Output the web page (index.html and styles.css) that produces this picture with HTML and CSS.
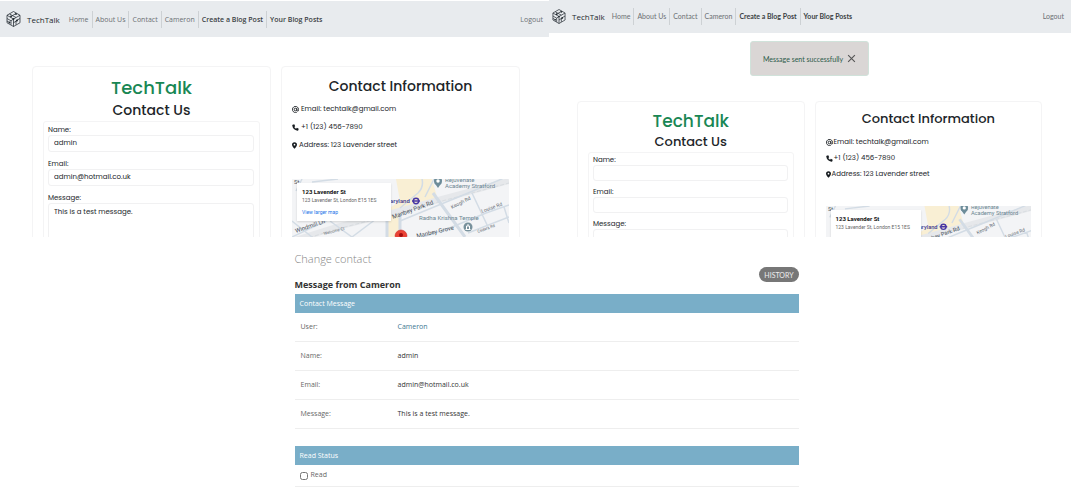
FILE: index.html
```html
<!DOCTYPE html>
<html lang="en">
<head>
<meta charset="utf-8">
<title>TechTalk contact</title>
<link rel="stylesheet" href="styles.css">
</head>
<body>
<svg class="defs" aria-hidden="true">
  <symbol id="logo" viewBox="0 0 30 32">
    <g fill="none" stroke="#222a30" stroke-width="1.500" stroke-linejoin="round">
      <path d="M15 1 28 8.500V23.500L15 31 2 23.500V8.500Z"/>
      <path d="M2 8.500 15 16 28 8.500M15 16V31M7 6l13 7M10 11l10-6M2 15l8 4.500v8M10 19.500 15 16M28 15l-8 4.500v8M15 23.500l8-5M2 20l5 3"/>
    </g>
    <g fill="#222a30"><circle cx="10" cy="11" r="1.800"/><circle cx="20" cy="6" r="1.800"/><circle cx="7" cy="23" r="1.800"/><circle cx="22" cy="19" r="1.800"/><circle cx="15" cy="16" r="1.800"/></g>
  </symbol>
  <symbol id="at" viewBox="0 0 16 16"><g fill="none" stroke="#171c20" stroke-width="2"><circle cx="8" cy="8" r="3"/><path d="M11 5v4.500a2 2 0 0 0 4 0V8a7 7 0 1 0-4 6.300"/></g></symbol>
  <symbol id="phone" viewBox="0 0 16 16"><path fill="#171c20" d="M5.200.8 1.500 1.500Q.5 2 .6 3.500 2 13 12.500 15.400q1.500.1 2-1l.8-3.600-4.100-2-1.900 2Q6.500 9.500 5.300 6.700l2-1.800Z"/></symbol>
  <symbol id="pin" viewBox="0 0 12 16"><path fill="#171c20" fill-rule="evenodd" d="M6 0a6 6 0 0 1 6 6c0 3-4 7.500-6 10C4 13.500 0 9 0 6a6 6 0 0 1 6-6Zm0 4a2 2 0 1 0 0 4 2 2 0 0 0 0-4Z"/></symbol>
  <symbol id="map" viewBox="0 0 217 58">
    <path fill="#f3f4f6" d="M0 0h217v58H0z"/>
    <path fill="#f9efd4" d="M104 0h36l5 18-16 8-22 8v24H96V30l12-8Z"/>
    <path fill="none" stroke="#e6e8eb" stroke-width="6" d="M0 62 45 48 100 34 150 20 217 2"/>
    <path fill="none" stroke="#d8dce0" stroke-width="1" stroke-dasharray="4 2" d="M0 64 45 50 100 36 150 22 217 4"/>
    <g fill="none" stroke="#d3dce5" stroke-width="1.500">
      <path stroke-width="3" d="M95 30v28M108 34v24M141 14l32 44"/>
      <path d="M130 0q2 8-4 14l-18 15M133 18 142 0M108 42l34-14 22-9 53-22M120 62l40-14 34-14 23-8M180 14l17 36M176 54l41-16M212 28l5 16M0 58l38-18M38 42l22 16M60 58l32-24M0 42l20 16M20 3 46 0M10 0 4 12"/>
    </g>
    <circle cx="146" cy="2" r="4" fill="#6d8c99"/><path fill="#6d8c99" d="M142.500 4h7L146 9z"/><circle cx="146" cy="2" r="1.700" fill="#fff"/>
    <circle cx="176" cy="48" r="4.500" fill="#78919c"/><path fill="none" stroke="#fff" d="M173.500 50.500h5M174.500 50v-3h3v3M176 47v-2"/>
    <g fill="none" stroke="#4937a5" stroke-width="1.500"><circle cx="124" cy="22" r="2.700"/><path d="M120 22h8"/></g>
    <path fill="#ea4335" stroke="#c5221f" stroke-width=".5" d="M103 57a6 6 0 0 1 12 0l-3 7h-6Z"/><circle cx="109" cy="56" r="2" fill="#a50e0e"/>
  </symbol>
</svg>

<main class="screens">
  <section class="screen screen-a">
    <nav class="navbar">
      <a class="brand" href="#"><svg class="logo"><use href="#logo"/></svg>TechTalk</a>
      <a href="#">Home</a><a href="#">About Us</a><a href="#">Contact</a><a href="#">Cameron</a><a class="strong" href="#">Create a Blog Post</a><a class="strong" href="#">Your Blog Posts</a>
      <a class="logout" href="#">Logout</a>
    </nav>
    <div class="cards">
      <div class="card">
        <h1>TechTalk</h1>
        <h2>Contact Us</h2>
        <form class="fields">
          <label for="a-name">Name:</label><input id="a-name" type="text" value="admin">
          <label for="a-email">Email:</label><input id="a-email" type="text" value="admin@hotmail.co.uk">
          <label for="a-msg">Message:</label><textarea id="a-msg">This is a test message.</textarea>
        </form>
      </div>
      <div class="card info">
        <h2>Contact Information</h2>
        <p><svg class="icon"><use href="#at"/></svg>Email: techtalk@gmail.com</p>
        <p><svg class="icon"><use href="#phone"/></svg>+1 (123) 456-7890</p>
        <p><svg class="icon slim"><use href="#pin"/></svg>Address: 123 Lavender street</p>
        <div class="map">
          <svg viewBox="0 0 217 58"><use href="#map"/>
            <g class="place"><text x="153" y="3">Rejuvenate</text><text x="153" y="9">Academy Stratford</text><text x="127" y="41">Radha Krishna Temple</text></g>
            <g class="station"><text x="98" y="24">aryland</text></g>
            <g class="road"><text x="2" y="5">St</text><text transform="translate(101 40) rotate(-20)">Manbey Park Rd</text><text transform="translate(125 59) rotate(-13)">Manbey Grove</text><text transform="translate(4 54) rotate(-19)">Windmill Ln</text></g>
            <g class="lane"><text transform="translate(160 30) rotate(-27)">Keogh Rd</text><text transform="translate(190 34) rotate(-20)">Louise Rd</text><text class="tiny" transform="translate(186 54) rotate(-20)">Cedars Rd</text><text class="tiny" transform="translate(32 56) rotate(-14)">Welcome Ct</text></g>
          </svg>
          <div class="bubble"><b>123 Lavender St</b><span>123 Lavender St, London E15 1ES</span><a href="#">View larger map</a></div>
        </div>
      </div>
    </div>
  </section>

  <section class="screen screen-b">
    <nav class="navbar">
      <a class="brand" href="#"><svg class="logo"><use href="#logo"/></svg>TechTalk</a>
      <a href="#">Home</a><a href="#">About Us</a><a href="#">Contact</a><a href="#">Cameron</a><a class="strong" href="#">Create a Blog Post</a><a class="strong" href="#">Your Blog Posts</a>
      <a class="logout" href="#">Logout</a>
    </nav>
    <div class="alert" role="alert">Message sent successfully
      <button type="button" aria-label="Close"><svg viewBox="0 0 8 8"><path d="M1 1l6 6M7 1 1 7" fill="none" stroke="#555" stroke-width="1"/></svg></button>
    </div>
    <div class="cards">
      <div class="card">
        <h1>TechTalk</h1>
        <h2>Contact Us</h2>
        <form class="fields">
          <label for="b-name">Name:</label><input id="b-name" type="text">
          <label for="b-email">Email:</label><input id="b-email" type="text">
          <label for="b-msg">Message:</label><textarea id="b-msg"></textarea>
        </form>
      </div>
      <div class="card info">
        <h2>Contact Information</h2>
        <p><svg class="icon"><use href="#at"/></svg>Email: techtalk@gmail.com</p>
        <p><svg class="icon"><use href="#phone"/></svg>+1 (123) 456-7890</p>
        <p><svg class="icon slim"><use href="#pin"/></svg>Address: 123 Lavender street</p>
        <div class="map">
          <svg viewBox="0 0 217 58"><use href="#map"/>
            <g class="place"><text x="153" y="3">Rejuvenate</text><text x="153" y="9">Academy Stratford</text></g>
            <g class="station"><text x="98" y="24">aryland</text></g>
            <g class="road"><text x="2" y="5">St</text><text transform="translate(101 40) rotate(-20)">Manbey Park Rd</text></g>
            <g class="lane"><text transform="translate(160 30) rotate(-27)">Keogh Rd</text><text transform="translate(190 34) rotate(-20)">Louise Rd</text></g>
          </svg>
          <div class="bubble"><b>123 Lavender St</b><span>123 Lavender St, London E15 1ES</span><a href="#">View larger map</a></div>
        </div>
      </div>
    </div>
  </section>
</main>

<section class="admin">
  <h2>Change contact</h2>
  <div class="title-row"><h3>Message from Cameron</h3><button type="button" class="history">HISTORY</button></div>
  <h4>Contact Message</h4>
  <dl>
    <div><dt>User:</dt><dd><a href="#">Cameron</a></dd></div>
    <div><dt>Name:</dt><dd>admin</dd></div>
    <div><dt>Email:</dt><dd>admin@hotmail.co.uk</dd></div>
    <div><dt>Message:</dt><dd>This is a test message.</dd></div>
  </dl>
  <h4>Read Status</h4>
  <div class="read"><input id="read" type="checkbox"><label for="read">Read</label></div>
</section>
</body>
</html>
```
FILE: styles.css
```css
* { box-sizing: border-box; }
body { margin: 0; background: #fff; color: #212529; font-family: "Segoe UI", "Open Sans", sans-serif; }
h1, h2, h3, h4, p, dl, dd { margin: 0; }
a { text-decoration: none; }
svg { display: block; }
.defs { position: absolute; width: 0; height: 0; }

.screens { display: grid; grid-template-columns: 549fr 522fr; height: 237px; overflow: hidden; }
.screen { min-width: 0; }
.screen-a { padding-top: 1px; }

.navbar { display: flex; align-items: center; height: 36px; padding: 0 6px; background: #e8ebee; font-size: 7px; line-height: 17px; white-space: nowrap; }
.navbar a { color: #6c7074; padding: 0 3px; border-left: 1px solid #cdd1d4; }
.navbar .brand { display: flex; align-items: center; gap: 6px; padding: 0 6px 0 0; border: 0; color: #24292d; font-family: "Open Sans", sans-serif; font-size: 8px; }
.navbar .brand + a { border: 0; }
.navbar .strong { color: #3b3f43; font-weight: 600; }
.navbar .logout { margin-left: auto; padding: 0; border: 0; }
.logo { width: 15px; height: 16px; }
.screen-b .navbar { height: 33px; padding: 0 7px 0 3px; font-family: Lato, sans-serif; }
.screen-b .navbar .brand { padding: 0 4px 0 0; }
.screen-b .navbar .strong { font-weight: 700; }
.screen-b .logo { width: 14px; height: 15px; }

.cards { display: grid; grid-template-columns: 1fr 1fr; gap: 10px; padding: 29px 29px 0 32px; font-family: Poppins, Inter, sans-serif; }
.card { height: 240px; padding: 9px 10px; border: 1px solid #f4f4f5; border-radius: 4px; }
.card h1 { color: #198754; font-size: 18px; font-weight: 500; line-height: 24px; text-align: center; }
.card h2 { font-size: 14px; font-weight: 500; line-height: 20px; text-align: center; }
.fields { display: flex; flex-direction: column; height: 160px; margin-top: 1px; padding: 2px 5px 2px 4px; border: 1px solid #f4f4f5; border-radius: 3px; font-size: 7px; }
.fields label { line-height: 11px; }
.fields input, .fields textarea { width: 100%; height: 17px; margin: 0 0 6px; padding: 0 5px; border: 1px solid #f1f1f2; border-radius: 3px; background: #fff; color: #212529; font: inherit; resize: none; }
.fields textarea { height: 70px; padding-top: 3px; }
.info p { display: flex; align-items: center; gap: 2px; font-size: 7px; line-height: 18px; }
.info h2 { margin-bottom: 4px; }
.icon { width: 7px; height: 7px; }
.icon.slim { width: 5px; }

.map { position: relative; margin-top: 25px; font-family: Roboto, sans-serif; }
.map > svg { width: 100%; height: auto; overflow: hidden; }
.map text { font-size: 6px; }
.place { fill: #6a8591; }
.station { fill: #3f3b8c; font-weight: 500; }
.road { fill: #48515b; }
.lane { fill: #626a72; }
.map .lane text { font-size: 5px; }
.map .lane .tiny { font-size: 4px; }
.bubble { position: absolute; left: 5px; top: 4px; display: flex; flex-direction: column; width: 94px; height: 38px; padding: 4px 5px; background: #fff; box-shadow: 0 1px 2px #0002; font-size: 5px; white-space: nowrap; }
.bubble b { font-size: 6px; line-height: 9px; color: #111; }
.bubble span { line-height: 9px; color: #666; }
.bubble a { margin-top: 3px; line-height: 9px; color: #1a73e8; }

.alert { display: flex; align-items: center; justify-content: center; gap: 4px; width: 119px; height: 35px; margin: 8px auto 0 201px; border: 1px solid #d0e2da; border-radius: 3px; background: #dad6d5; color: #2c5a49; font-family: Lato, sans-serif; font-size: 7px; }
.alert button { width: 9px; height: 9px; padding: 0; border: 0; background: none; }
.screen-b .cards { padding: 25px 29px 0 28px; }
.screen-b .card { padding: 8px 10px; }
.screen-b .card h1 { font-size: 17px; line-height: 23px; }
.screen-b .card h2 { font-size: 13px; line-height: 18px; }
.screen-b .fields input { height: 16px; }
.screen-b .fields label { line-height: 10px; }
.screen-b .info h2 { margin-bottom: 6px; }
.screen-b .info p { gap: 1px; line-height: 16px; }
.screen-b .map { margin-top: 24px; }
.screen-b .bubble { width: 90px; }

.admin { width: 47.1%; margin: 0 auto 0 27.5%; padding-top: 14px; font-size: 7px; color: #666; }
.admin h2 { color: #858585; font-size: 11px; font-weight: 300; line-height: 16px; }
.title-row { display: flex; align-items: flex-start; justify-content: space-between; height: 27px; }
.title-row h3 { align-self: flex-end; color: #333; font-size: 9px; font-weight: 700; line-height: 18px; }
.history { width: 40px; height: 15px; padding: 0; border: 0; border-radius: 8px; background: #777; color: #eee; font: 7px Lato, sans-serif; }
.admin h4 { padding: 0 5px; background: #79aec8; color: #fff; font-size: 7px; font-weight: 400; line-height: 19px; }
.admin dl { margin-bottom: 17px; }
.admin dl div { display: grid; grid-template-columns: 97px 1fr; padding-left: 6px; border-bottom: 1px solid #eee; line-height: 28px; }
.admin dd { color: #333; }
.admin dd a { color: #417893; }
.read { display: flex; align-items: flex-start; gap: 3px; height: 22px; padding: 5px 5px 0; border-bottom: 1px solid #eee; line-height: 9px; }
.read input { width: 8px; height: 8px; margin: 2px 0 0; }
```
